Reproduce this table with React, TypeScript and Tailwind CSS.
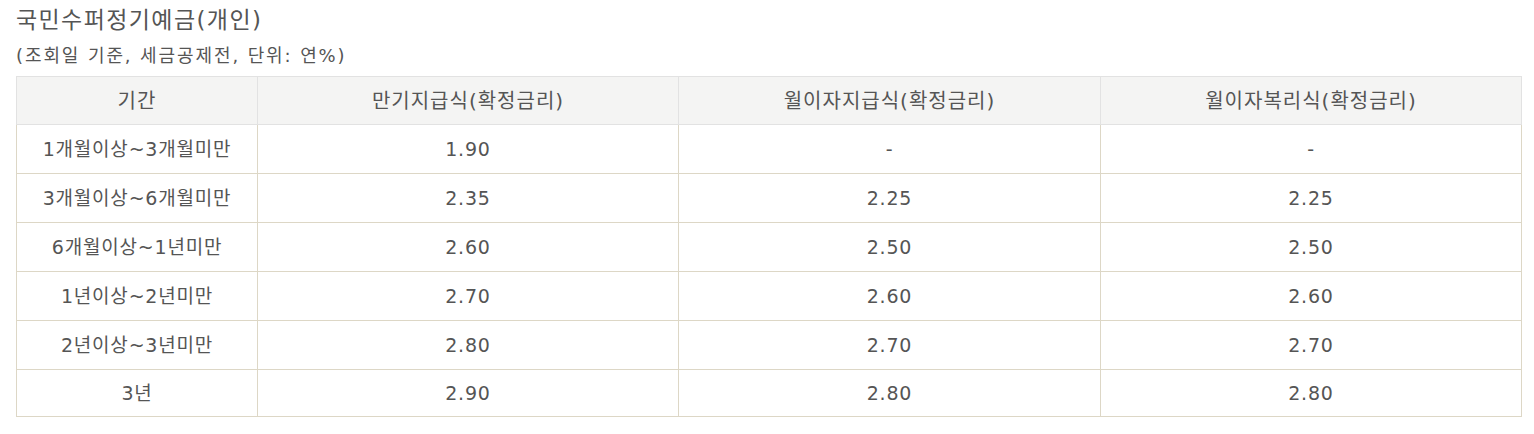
import React from "react";

const rows: [string, string, string, string][] = [
  ["1개월이상~3개월미만", "1.90", "-", "-"],
  ["3개월이상~6개월미만", "2.35", "2.25", "2.25"],
  ["6개월이상~1년미만", "2.60", "2.50", "2.50"],
  ["1년이상~2년미만", "2.70", "2.60", "2.60"],
  ["2년이상~3년미만", "2.80", "2.70", "2.70"],
  ["3년", "2.90", "2.80", "2.80"],
];

export default function App() {
  return (
    <div
      className="bg-white text-[#555] pl-4 pr-[13px] pt-[5px]"
      style={{ fontFamily: '"DejaVu Sans", "Noto Sans CJK KR", sans-serif' }}
    >
      <h2 className="text-[23px] leading-[30px] text-[#555] tracking-[1.4px]">국민수퍼정기예금(개인)</h2>
      <p className="text-[18px] leading-[24px] mt-[9px] text-[#555] tracking-[1.9px]">(조회일 기준, 세금공제전, 단위: 연%)</p>
      <table className="mt-[8px] w-[1505px] border-collapse table-fixed text-[19px]">
        <colgroup>
          <col className="w-[241px]" />
          <col className="w-[421px]" />
          <col className="w-[422px]" />
          <col className="w-[421px]" />
        </colgroup>
        <thead>
          <tr className="h-[48px] bg-[#f4f4f3]">
            {["기간", "만기지급식(확정금리)", "월이자지급식(확정금리)", "월이자복리식(확정금리)"].map((h) => (
              <th key={h} className="border border-[#e2e2e2] font-normal text-center text-[20px] tracking-[1px]">
                {h}
              </th>
            ))}
          </tr>
        </thead>
        <tbody>
          {rows.map((r, i) => (
            <tr key={i} className={i === rows.length - 1 ? "h-[47px]" : "h-[49px]"}>
              {r.map((c, j) => (
                <td key={j} className="border border-[#ddd7c6] text-center tracking-[0.8px]">
                  {c}
                </td>
              ))}
            </tr>
          ))}
        </tbody>
      </table>
    </div>
  );
}
